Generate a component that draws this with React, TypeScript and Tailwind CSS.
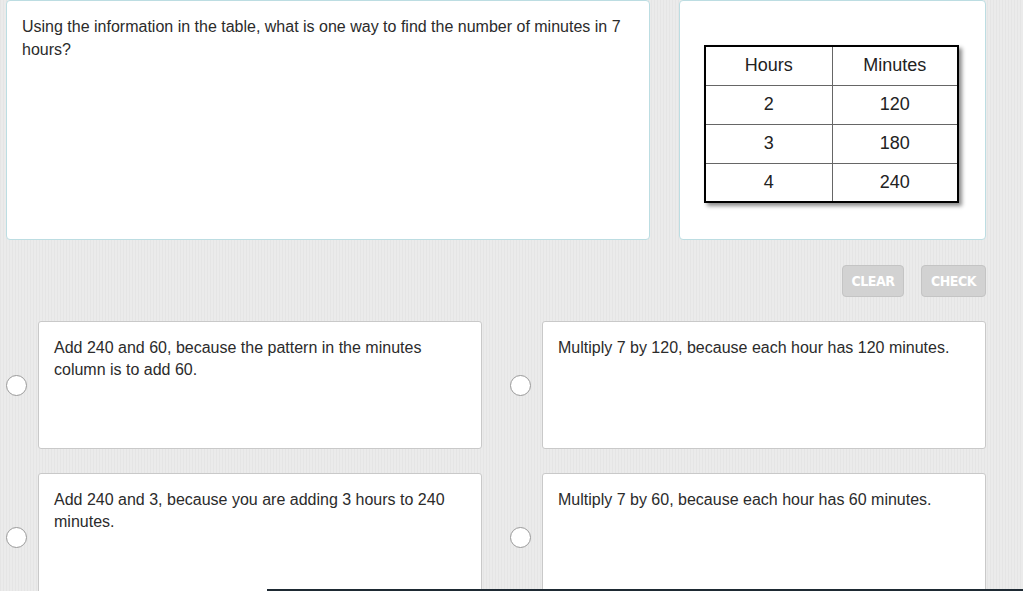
const font = "font-['Liberation_Sans',Arial,sans-serif]";

const rows = [
  ["2", "120"],
  ["3", "180"],
  ["4", "240"],
];

const answers = [
  "Add 240 and 60, because the pattern in the minutes column is to add 60.",
  "Multiply 7 by 120, because each hour has 120 minutes.",
  "Add 240 and 3, because you are adding 3 hours to 240 minutes.",
  "Multiply 7 by 60, because each hour has 60 minutes.",
];

function Choice({ text }: { text: string }) {
  return (
    <div className="flex items-center gap-[11px]">
      <span className="size-[21px] shrink-0 rounded-full border border-[#9a9a9a] bg-white" />
      <div className="h-[128px] w-[444px] rounded-[3px] border border-[#c9c9c9] bg-white px-[15px] pt-[15px] text-[16px] leading-[22px] text-[#2b2b2b]">
        {text}
      </div>
    </div>
  );
}

export default function App() {
  return (
    <div
      className={`relative h-[591px] w-full overflow-hidden bg-[#e9e9e9] bg-[repeating-linear-gradient(90deg,#e5e5e5_0px,#e5e5e5_1px,#ebebeb_1px,#ebebeb_3px)] px-[6px] ${font}`}
    >
      <div className="flex gap-[29px]">
        <div className="h-[240px] w-[644px] rounded-[4px] border border-[#bcdde2] bg-white px-[15px] pt-[14px] text-[16px] leading-[23px] text-[#2b2b2b]">
          Using the information in the table, what is one way to find the number of minutes in 7 hours?
        </div>
        <div className="flex h-[240px] w-[307px] justify-center rounded-[4px] border border-[#bcdde2] bg-white pt-[44px] pr-[2px]">
          <table className="h-[156px] w-[255px] border-collapse border-2 border-black text-center text-[18px] text-[#222] shadow-[3px_3px_4px_rgba(0,0,0,0.45)]">
            <tbody>
              <tr className="h-[39px]">
                <td className="w-[127px] border border-[#666]">Hours</td>
                <td className="border border-[#666]">Minutes</td>
              </tr>
              {rows.map(([h, m]) => (
                <tr key={h} className="h-[39px]">
                  <td className="border border-[#666]">{h}</td>
                  <td className="border border-[#666]">{m}</td>
                </tr>
              ))}
            </tbody>
          </table>
        </div>
      </div>

      <div className="mt-[25px] flex w-[980px] justify-end gap-[17px] font-['DejaVu_Sans',sans-serif] font-stretch-condensed text-[14px] font-bold tracking-[-0.5px] text-white">
        <button className="h-[32px] w-[62px] rounded-[4px] border border-[#c4c4c4] bg-[#d2d2d2]">CLEAR</button>
        <button className="h-[32px] w-[65px] rounded-[4px] border border-[#c4c4c4] bg-[#d2d2d2]">CHECK</button>
      </div>

      <div className="mt-[24px] grid w-[980px] grid-cols-[476px_476px] gap-x-[28px] gap-y-[24px]">
        {answers.map((a) => (
          <Choice key={a} text={a} />
        ))}
      </div>

      <div className="absolute bottom-0 left-[267px] right-0 h-[2px] bg-[#1e2a33]" />
    </div>
  );
}
